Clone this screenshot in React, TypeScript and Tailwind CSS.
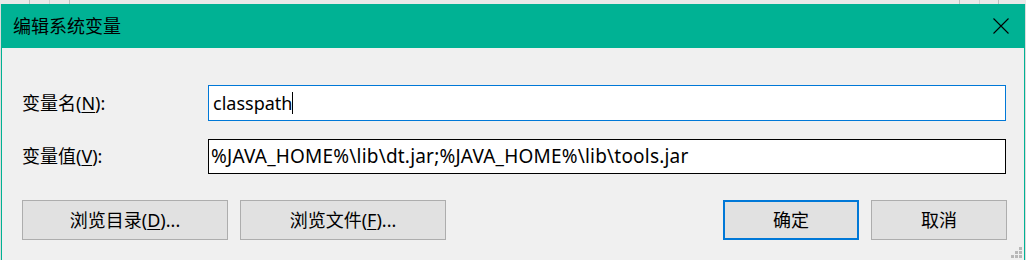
const font = { fontFamily: '"Noto Sans", "Noto Sans CJK SC", sans-serif' };

function CloseIcon() {
  return (
    <svg width="16" height="16" viewBox="0 0 16 16" className="block">
      <path d="M0.5 0.5 L15.5 15.5 M15.5 0.5 L0.5 15.5" stroke="#000" strokeWidth="1.1" fill="none" />
    </svg>
  );
}

function Button({ children, primary }: { children: React.ReactNode; primary?: boolean }) {
  return (
    <button
      className={
        primary
          ? 'h-[40px] w-[136px] bg-[#e1e1e1] border-2 border-[#0078d7] text-[18px] text-black'
          : 'h-[40px] bg-[#e1e1e1] border border-[#adadad] text-[18px] text-black'
      }
    >
      {children}
    </button>
  );
}

export default function App() {
  return (
    <div className="w-[1026px] h-[260px] overflow-hidden bg-[#dcdcdc]" style={font}>
      {/* background windows peeking above */}
      <div className="h-[4px] flex bg-[#e9e9e9]">
        <div className="w-[29px]" />
        <div className="w-px bg-[#bdbdbd]" />
        <div className="w-[19px]" />
        <div className="w-px bg-[#d0d0d0]" />
        <div className="w-[19px]" />
        <div className="w-px bg-[#bdbdbd]" />
        <div className="w-[889px]" />
        <div className="w-px bg-[#bdbdbd]" />
        <div className="w-[19px]" />
        <div className="w-px bg-[#d0d0d0]" />
        <div className="w-[18px]" />
        <div className="w-px bg-[#bdbdbd]" />
      </div>

      <div className="ml-px w-[1024px] h-[256px] flex flex-col">
        <div className="h-[44px] bg-[#00b294] flex items-center justify-between pl-[12px] pr-[16px]">
          <span className="text-[18px] text-black leading-none">编辑系统变量</span>
          <CloseIcon />
        </div>

        <div className="flex-1 bg-[#f0f0f0] border-x border-[#00b294] pt-[37px] relative">
          <div className="flex items-center">
            <label className="w-[206px] pl-[20px] text-[18px] text-black">
              变量名(<span className="underline underline-offset-2">N</span>):
            </label>
            <div className="w-[798px] h-[36px] bg-white border border-[#0078d7] flex items-center pl-[4px] text-[18px] text-black">
              classpath<span className="inline-block w-px h-[22px] bg-black" />
            </div>
          </div>

          <div className="flex items-center mt-[18px]">
            <label className="w-[206px] pl-[20px] text-[18px] text-black">
              变量值(<span className="underline underline-offset-2">V</span>):
            </label>
            <div className="w-[798px] h-[35px] bg-white border border-black flex items-center pl-[2px] text-[19px] tracking-[0.2px] text-black">
              %JAVA_HOME%\lib\dt.jar;%JAVA_HOME%\lib\tools.jar
            </div>
          </div>

          <div className="flex mt-[26px] pl-[20px] pr-[17px]">
            <div className="flex gap-[14px]">
              <div className="w-[204px] flex">
                <Button>
                  <span className="inline-block w-[204px]">
                    浏览目录(<span className="underline underline-offset-2">D</span>)...
                  </span>
                </Button>
              </div>
              <div className="w-[204px] flex">
                <Button>
                  <span className="inline-block w-[204px]">
                    浏览文件(<span className="underline underline-offset-2">F</span>)...
                  </span>
                </Button>
              </div>
            </div>
            <div className="flex-1" />
            <div className="flex gap-[12px]">
              <Button primary>确定</Button>
              <div className="w-[136px] flex">
                <Button>
                  <span className="inline-block w-[134px]">取消</span>
                </Button>
              </div>
            </div>
          </div>

          {/* resize grip */}
          <svg width="12" height="12" viewBox="0 0 12 12" className="absolute right-[2px] bottom-[1px]">
            <rect x="9" y="0" width="3" height="3" fill="#b8b8b8" />
            <rect x="5" y="4" width="3" height="3" fill="#b8b8b8" />
            <rect x="9" y="4" width="3" height="3" fill="#b8b8b8" />
            <rect x="1" y="8" width="3" height="3" fill="#b8b8b8" />
            <rect x="5" y="8" width="3" height="3" fill="#b8b8b8" />
            <rect x="9" y="8" width="3" height="3" fill="#b8b8b8" />
          </svg>
        </div>
      </div>
    </div>
  );
}
